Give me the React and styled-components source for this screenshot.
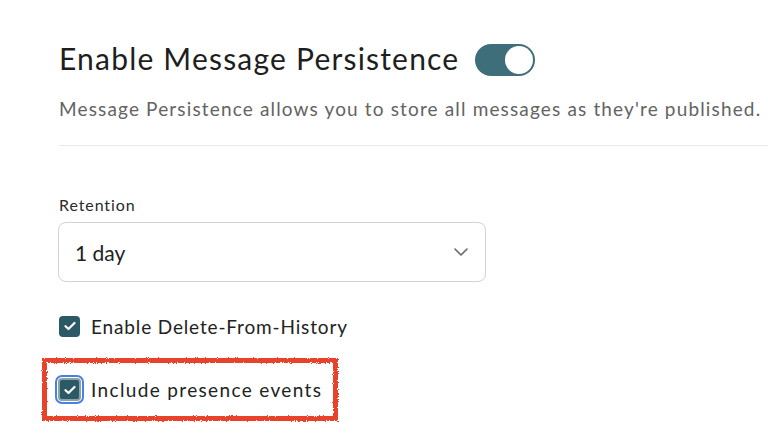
import React from "react";
import styled, { createGlobalStyle } from "styled-components";

const Global = createGlobalStyle`
  html, body { margin: 0; padding: 0; background: #fff; }
  body { font-family: Lato, "Noto Sans", sans-serif; color: #222; overflow: hidden; }
  * { box-sizing: border-box; }
`;

const Page = styled.div`
  width: 768px;
  height: 436px;
  padding: 36px 0 0 59px;
  display: flex;
  flex-direction: column;
  overflow: hidden;
`;

const Header = styled.div`
  display: flex;
  align-items: center;
  gap: 16px;
  height: 44px;
`;

const Title = styled.h1`
  margin: 0;
  font-size: 30px;
  font-weight: 400;
  color: #1e1e1e;
  letter-spacing: 1.2px;
  white-space: nowrap;
`;

const Track = styled.button`
  width: 60px;
  height: 32px;
  border: none;
  border-radius: 16px;
  background: #3d6e79;
  padding: 2px;
  margin-top: 4px;
  display: flex;
  justify-content: flex-end;
  cursor: pointer;
`;

const Knob = styled.span`
  width: 28px;
  height: 28px;
  border-radius: 50%;
  background: #fff;
`;

const Description = styled.p`
  margin: 17px 0 0;
  font-size: 19px;
  color: #636363;
  white-space: nowrap;
  letter-spacing: 1.15px;
`;

const Divider = styled.hr`
  margin: 25px 0 0;
  border: none;
  border-top: 1px solid #e8e8e8;
  width: 100%;
`;

const Field = styled.div`
  margin-top: 49px;
  display: flex;
  flex-direction: column;
  gap: 8px;
`;

const Label = styled.label`
  font-size: 16px;
  color: #2a2a2a;
  letter-spacing: 0.9px;
`;

const Select = styled.div`
  width: 428px;
  height: 60px;
  margin-left: -1px;
  border: 1px solid #d3d3d3;
  border-radius: 8px;
  display: flex;
  align-items: center;
  justify-content: space-between;
  padding: 0 17px 0 16px;
  font-size: 21px;
  color: #222;
`;

const Checks = styled.div`
  margin-top: 32px;
  display: flex;
  flex-direction: column;
  gap: 20px;
`;

const Annotation = styled.div`
  position: relative;
  margin-left: -17px;
  width: 296px;
  height: 63px;
  display: flex;
  align-items: center;
  padding-left: 16px;

  &::before {
    content: "";
    position: absolute;
    inset: 0;
    border: 5px solid #e8432c;
    filter: url(#rough);
    pointer-events: none;
  }
`;

const Row = styled.label`
  display: flex;
  align-items: center;
  gap: ${(p) => (p.$wide ? "10px" : "11px")};
  font-size: 19px;
  color: #222;
  letter-spacing: ${(p) => (p.$wide ? "1.35px" : "0.85px")};
  height: 24px;
`;

const Box = styled.span`
  width: 21px;
  height: 21px;
  border-radius: 4px;
  background: #2b5a66;
  display: flex;
  align-items: center;
  justify-content: center;
  flex: none;
  ${(p) =>
    p.$focused &&
    `
    width: 23px;
    height: 23px;
    border: 2px solid #8aa3a8;
    box-shadow: 0 0 0 1px #fff, 0 0 0 3px #4a7fe3;
  `}
`;

const Hidden = styled.svg`
  position: absolute;
  width: 0;
  height: 0;
`;

const Check = () => (
  <svg width="12" height="10" viewBox="0 0 12 10" fill="none">
    <path d="M1.5 5.2L4.5 8L10.5 2" stroke="#fff" strokeWidth="2.2" strokeLinecap="round" strokeLinejoin="round" />
  </svg>
);

const Chevron = () => (
  <svg width="14" height="8" viewBox="0 0 14 8" fill="none">
    <path d="M1 1L7 7L13 1" stroke="#666" strokeWidth="1.6" strokeLinecap="round" strokeLinejoin="round" />
  </svg>
);

export default function App() {
  return (
    <>
      <Global />
      <Hidden aria-hidden="true">
        <filter id="rough">
          <feTurbulence type="fractalNoise" baseFrequency="0.9" numOctaves="2" seed="3" />
          <feDisplacementMap in="SourceGraphic" scale="3" />
        </filter>
      </Hidden>
      <Page>
        <Header>
          <Title>Enable Message Persistence</Title>
          <Track aria-label="toggle">
            <Knob />
          </Track>
        </Header>
        <Description>
          Message Persistence allows you to store all messages as they're published.
        </Description>
        <Divider />
        <Field>
          <Label>Retention</Label>
          <Select>
            <span>1 day</span>
            <Chevron />
          </Select>
        </Field>
        <Checks>
          <Row>
            <Box>
              <Check />
            </Box>
            Enable Delete-From-History
          </Row>
          <Annotation>
            <Row $wide>
              <Box $focused>
                <Check />
              </Box>
              Include presence events
            </Row>
          </Annotation>
        </Checks>
      </Page>
    </>
  );
}
